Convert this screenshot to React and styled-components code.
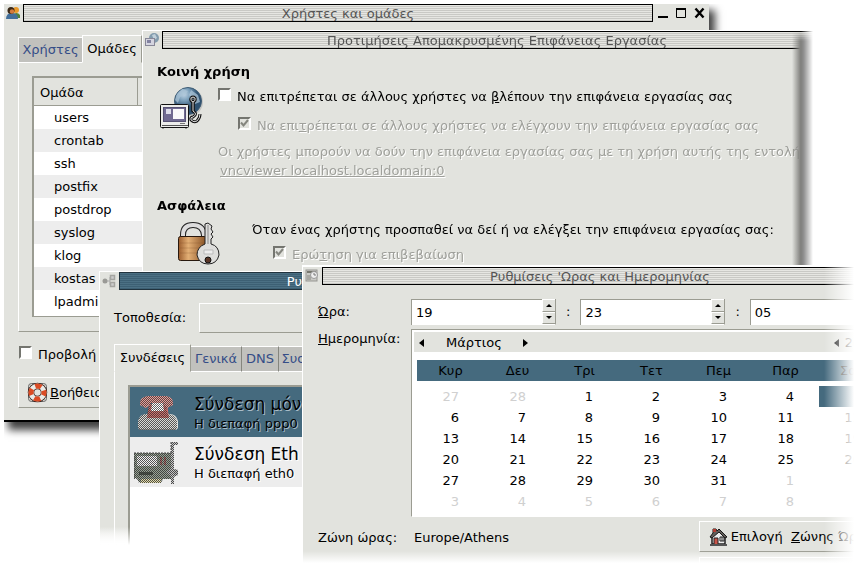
import React from "react";
import styled, { createGlobalStyle, css } from "styled-components";

const c = {
  face: "#e2e3de",
  dim: "#c1c1bd",
  blue: "#456a7e",
  edge: "#9b9c92",
  muted: "#9fa09b",
  link: "#354d87",
};

const Global = createGlobalStyle`
  * { box-sizing: border-box; }
  body { margin: 0; background: #fff; overflow: hidden; }
  body, button, input, table { font: 13px/20px "DejaVu Sans", sans-serif; color: #000; }
  button, input { margin: 0; }
`;

/* ---------- desktop and window frames ---------- */

const Desktop = styled.main`
  position: relative;
  height: 100vh;
  overflow: hidden;
`;

const Frame = styled.section`
  position: absolute;
  background: ${c.face};
`;

const UsersFrame = styled(Frame)`
  left: 4px;
  top: 4px;
  right: 147px;
  border-bottom: 2px solid #000;
  box-shadow: 5px 7px 8px 1px rgba(0, 0, 0, 0.75);
  clip-path: inset(0 -20px -22px 0);
`;

const RemoteFrame = styled(Frame)`
  left: 142px;
  top: 30px;
  right: 42px;
  height: 280px;
  overflow: hidden;
  mask-image: linear-gradient(to right, #000 calc(100% - 13px), transparent calc(100% - 1px));
  border-left: 1px solid #fff;
  border-top: 1px solid #fff;
  &::after {
    content: "";
    position: absolute;
    inset: 0 0 0 auto;
    width: 22px;
    background: linear-gradient(to right, rgba(226, 227, 222, 0), #858582 8px, #6f6f6f 12px);
    mask-image: linear-gradient(to bottom, transparent, #000 10px);
  }
`;

const NetworkFrame = styled(Frame)`
  left: 99px;
  top: 271px;
  width: 204px;
  overflow: hidden;
  border-left: 1px solid #fff;
  border-top: 1px solid #fff;
  background: linear-gradient(${c.face} calc(100% - 18px), #fff);
  &::after {
    content: "";
    position: absolute;
    inset: auto 0 0 0;
    height: 18px;
    background: linear-gradient(rgba(255, 255, 255, 0), #fff);
  }
`;

const ClockFrame = styled(Frame)`
  left: 302px;
  top: 265px;
  right: 0;
  bottom: 0;
  overflow: hidden;
  border-left: 1px solid #fff;
  border-top: 2px solid #fff;
  &::before {
    content: "";
    position: absolute;
    z-index: 1;
    inset: 0 0 0 auto;
    width: 32px;
    background: linear-gradient(to right, rgba(255, 255, 255, 0), #fff 30px);
    pointer-events: none;
  }
  &::after {
    content: "";
    position: absolute;
    inset: auto 0 0 0;
    height: 15px;
    background: linear-gradient(rgba(255, 255, 255, 0), #fff 12px);
    pointer-events: none;
  }
`;

const Spill = styled.div`
  width: calc(100% + ${(p) => p.$by}px);
`;

/* ---------- title bar ---------- */

const TitleRow = styled.header`
  display: flex;
  align-items: center;
  gap: 3px;
  height: 18px;
  padding-left: 2px;
`;

const TitleIcon = styled.svg`
  flex: none;
  width: 14px;
  height: 14px;
`;

const TitleBar = styled.h1`
  flex: 1;
  height: 18px;
  margin: 0;
  padding-left: ${(p) => p.$shift || 0}px;
  overflow: hidden;
  border: 1px solid #000;
  font-size: 13px;
  font-weight: 400;
  line-height: 17px;
  text-align: center;
  white-space: nowrap;
  color: #555;
  background: repeating-linear-gradient(#e6e6e2 0 1px, #c9c9c5 1px 2px);
  ${(p) =>
    p.$active &&
    css`
      color: #fff;
      text-align: right;
      border-color: #21333e;
      background: repeating-linear-gradient(#4b7084 0 1px, #3d6074 1px 2px);
    `}
`;

const WindowButtons = styled.div`
  display: flex;
  gap: 6px;
  width: 53px;
  flex: none;
`;

const WindowButton = styled.button`
  width: 13px;
  height: 16px;
  padding: 0;
  border: 0;
  background: none;
  svg { display: block; width: 13px; height: 16px; }
`;

function WinControls() {
  return (
    <WindowButtons>
      <WindowButton aria-label="Ελαχιστοποίηση">
        <svg viewBox="0 0 13 16"><path d="M2 11h10v2H2z" /></svg>
      </WindowButton>
      <WindowButton aria-label="Μεγιστοποίηση">
        <svg viewBox="0 0 13 16"><path d="M1.500 4v8.500h9V4" fill="none" stroke="#000" /><path d="M1 3h10v2H1z" /></svg>
      </WindowButton>
      <WindowButton aria-label="Κλείσιμο">
        <svg viewBox="0 0 13 16"><path d="M1.500 3.500l8 9m0-9l-8 9" stroke="#000" strokeWidth="2.400" /></svg>
      </WindowButton>
    </WindowButtons>
  );
}

/* ---------- shared controls ---------- */

const Tabs = styled.div`
  display: flex;
  align-items: flex-end;
`;

const Tab = styled.button`
  flex: none;
  height: ${(p) => (p.$on ? 28 : 26)}px;
  width: ${(p) => p.$w}px;
  padding: 0;
  overflow: hidden;
  white-space: nowrap;
  border: solid #fff;
  border-width: 1px 0 1px 1px;
  color: ${c.link};
  background: ${c.dim};
  ${(p) =>
    p.$on
      ? css`
          color: #000;
          background: ${c.face};
          border-bottom-color: ${c.face};
          border-right: 1px solid ${c.edge};
        `
      : p.$ruled &&
        css`
          border-left: 0;
          border-right: 1px solid #85867e;
        `}
`;

const Panel = styled.div`
  border-left: 1px solid #fff;
  border-bottom: 1px solid ${c.edge};
`;

const Sunken = css`
  border: solid ${c.edge};
  border-width: 2px 0 0 2px;
  background: #fff;
`;

const Check = styled.input`
  appearance: none;
  flex: none;
  width: 13px;
  height: 13px;
  border: 2px solid;
  border-color: #74756f #fff #fff #74756f;
  background: #fff;
  &:disabled { background: ${c.face}; }
`;

const CheckLabel = styled.label`
  display: flex;
  align-items: flex-start;
  gap: 6px;
  height: 20px;
  padding-top: 1px;
  white-space: nowrap;
  position: relative;
  > span { line-height: 18px; }
`;

const Tick = styled.svg`
  position: absolute;
  left: 2px;
  top: 3px;
  width: 9px;
  height: 9px;
`;

const Raised = styled.button`
  display: flex;
  align-items: center;
  gap: 2px;
  height: 31px;
  padding: 0 0 0 8px;
  border: solid;
  border-width: 1px 0 1px 1px;
  border-color: #fff ${c.edge} ${c.edge} #fff;
  background: ${c.face};
  white-space: nowrap;
  svg { flex: none; width: 21px; height: 21px; }
`;

const Faded = styled.span`
  color: ${c.muted};
  text-shadow: 1px 1px #fff;
`;

/* ---------- users and groups ---------- */

const UsersBody = styled.div`
  padding: 13px 14px 12px;
`;

const GroupsPanel = styled(Panel)`
  padding: 13px 13px 14px;
`;

const GroupTableBox = styled.div`
  ${Sunken}
  height: 241px;
  overflow: hidden;
  border-bottom: 1px solid ${c.edge};
`;

const GroupTable = styled.table`
  width: 100%;
  border-spacing: 0;
  table-layout: fixed;
  th {
    height: 28px;
    padding: 3px 0 0 6px;
    text-align: left;
    font-weight: 400;
    background: ${c.face};
    border-bottom: 1px solid ${c.edge};
    border-right: 1px solid ${c.edge};
  }
  th:first-child { width: 104px; }
  td { height: 23px; padding: 0 0 0 20px; white-space: nowrap; }
  tr:nth-child(even) td { background: #ededed; }
`;

const AllRow = styled.div`
  padding: 13px 0 0 1px;
  height: 45px;
`;

const groups = ["users", "crontab", "ssh", "postfix", "postdrop", "syslog", "klog", "kostas", "lpadmin"];

function Lifebuoy() {
  return (
    <svg viewBox="0 0 21 21">
      <rect x="1.500" y="1.500" width="18" height="18" rx="3" fill="none" stroke="#666" />
      <circle cx="10.500" cy="10.500" r="6.500" fill="none" stroke="#3a2520" strokeWidth="6.500" />
      <circle cx="10.500" cy="10.500" r="6.500" fill="none" stroke="#e9ebe8" strokeWidth="5" />
      <circle cx="10.500" cy="10.500" r="6.500" fill="none" stroke="#db4b24" strokeWidth="5" strokeDasharray="6.200 4.010" strokeDashoffset="3.100" />
    </svg>
  );
}

function UsersWindow() {
  return (
    <UsersFrame>
      <TitleRow>
        <TitleIcon viewBox="0 0 14 14">
          <circle cx="10" cy="4" r="3" fill="#e99929" /><path d="M6 12V9q5-4 8 0v3z" fill="#50823a" />
          <path d="M0 13q0-6 6-6t6 6z" fill="#426f9b" /><circle cx="5" cy="4.500" r="3.500" fill="#392817" /><circle cx="6" cy="5.500" r="2.200" fill="#d37b3e" />
        </TitleIcon>
        <TitleBar $shift={20}>Χρήστες και ομάδες</TitleBar>
        <WinControls />
      </TitleRow>
      <UsersBody>
        <Tabs role="tablist">
          <Tab role="tab" $w={64}>Χρήστες</Tab>
          <Tab role="tab" $w={60} $on>Ομάδες</Tab>
        </Tabs>
        <GroupsPanel>
          <GroupTableBox>
            <GroupTable>
              <thead><tr><th>Ομάδα</th><th /></tr></thead>
              <tbody>
                {groups.map((g) => <tr key={g}><td>{g}</td><td /></tr>)}
              </tbody>
            </GroupTable>
          </GroupTableBox>
        </GroupsPanel>
        <AllRow>
          <CheckLabel><Check type="checkbox" /><span>Προβολή</span></CheckLabel>
        </AllRow>
        <Raised><Lifebuoy /><span><u>Β</u>οήθεια</span></Raised>
      </UsersBody>
    </UsersFrame>
  );
}

/* ---------- remote desktop ---------- */

const RemoteBody = styled.div`
  padding: 13px 14px 0;
`;

const Heading = styled.h2`
  margin: 0;
  font-size: 13px;
  line-height: 20px;
`;

const Sharing = styled.div`
  display: flex;
  gap: 14px;
  padding: 5px 0 16px 3px;
`;

const Lines = styled.div`
  flex: none;
  display: flex;
  flex-direction: column;
  white-space: nowrap;
`;

const Inset = styled.div`
  padding: ${(p) => p.$top}px 0 0 ${(p) => p.$left}px;
`;

const Note = styled.p`
  margin: 6px 0 0;
  line-height: 19px;
  a { color: inherit; margin-left: 2px; }
`;

const Art = styled.svg`
  flex: none;
  width: ${(p) => p.$w}px;
  height: ${(p) => p.$h}px;
`;

const Security = styled.div`
  display: flex;
  gap: 31px;
  padding: 4px 0 0 20px;
`;

function SharedScreen() {
  return (
    <Art $w={44} $h={46} viewBox="0 0 44 46">
      <defs>
        <radialGradient id="globe" cx=".35" cy=".25"><stop offset="0" stopColor="#c1d5e5" /><stop offset=".5" stopColor="#769bb7" /><stop offset="1" stopColor="#2d506f" /></radialGradient>
      </defs>
      <circle cx="29" cy="15" r="14" fill="#999" opacity=".4" />
      <circle cx="28" cy="14" r="13.500" fill="url(#globe)" stroke="#3e5c74" />
      <path d="M17 7l5-5 6 2-3 4-5 2-2 6-3-3zM31 3l7 5 2 7-5 2-3-5-3-4z" fill="#a9c3d6" opacity=".75" />
      <rect x="0.500" y="17.500" width="28" height="23" rx="1" fill="#ececea" stroke="#111" />
      <rect x="3.500" y="20.500" width="22" height="14" fill="#706a91" stroke="#565273" />
      <rect x="6" y="22" width="5" height="5" fill="#dcdce8" />
      <rect x="13" y="22" width="11" height="10" fill="#f9f9fa" />
      <path d="M2 38.500h26M3 41v1m23-1v1" stroke="#555" /><path d="M20 36.500h5" stroke="#777" />
      <path d="M33 24v-9m-2-4q-1 3 2 4 3-1 2-4-2-2-4 0" fill="none" stroke="#111" strokeWidth="3" />
      <path d="M33 15v9q5 3 0 6-3 0-2 3 3 3 6 1 3-3 3-7" fill="none" stroke="#111" strokeWidth="3" />
      <path d="M33 15v9q5 3 0 6-3 0-2 3 3 3 6 1 3-3 3-7M31 11q-1 3 2 4 3-1 2-4-2-2-4 0" fill="none" stroke="#ddd" />
    </Art>
  );
}

function Padlock() {
  return (
    <Art $w={44} $h={48} viewBox="0 0 44 48">
      <defs>
        <linearGradient id="brass"><stop offset="0" stopColor="#9a5c2d" /><stop offset=".35" stopColor="#e3af75" /><stop offset="1" stopColor="#865023" /></linearGradient>
      </defs>
      <path d="M6 18V15Q6 5 16 5t11 10v3" fill="none" stroke="#222" strokeWidth="6" />
      <path d="M6 18V15Q6 5 16 5t11 10v3" fill="none" stroke="#ddd" strokeWidth="4" />
      <rect x="1.500" y="16.500" width="28" height="24" rx="2" fill="url(#brass)" stroke="#28190e" />
      <path d="M3 23h25M3 28h25M3 33h25" stroke="#7b4824" opacity=".25" />
      <path d="M28 4l3-1 4 3-1 3 2 3-2 2 2 3-2 2v5q8 2 8 11-2 9-11 9t-11-9q0-8 8-11z" fill="#dededc" stroke="#222" />
      <path d="M31 5v19" stroke="#888" /><path d="M27 30h9v4h-9z" fill="#eee" stroke="#bbb" />
      <circle cx="31" cy="40" r="3" fill="#5a3627" stroke="#111" />
    </Art>
  );
}

const Ticked = ({ children }) => (
  <CheckLabel>
    <Check type="checkbox" defaultChecked disabled />
    <Tick viewBox="0 0 9 9"><path d="M1 3.500l2.500 3L8 1" fill="none" stroke="#85867f" strokeWidth="2" /></Tick>
    <Faded>{children}</Faded>
  </CheckLabel>
);

function RemoteWindow() {
  return (
    <RemoteFrame>
      <Spill $by={74}>
        <TitleRow>
          <TitleIcon viewBox="0 0 14 14">
            <circle cx="9" cy="5" r="5" fill="#839cae" /><path d="M7 2l3-1 2 4-3 2z" fill="#c1d0da" />
            <rect x="0.500" y="5.500" width="9" height="7" fill="#d4d4df" stroke="#878797" /><path d="M2 7h4v3H2z" fill="#8282a0" />
          </TitleIcon>
          <TitleBar>Προτιμήσεις Απομακρυσμένης Επιφάνειας Εργασίας</TitleBar>
          <WinControls />
        </TitleRow>
        <RemoteBody>
          <Heading>Κοινή χρήση</Heading>
          <Sharing>
            <SharedScreen />
            <Lines>
              <CheckLabel><Check type="checkbox" /><span>Να επιτρέπεται σε άλλους χρήστες να <u>β</u>λέπουν την επιφάνεια εργασίας σας</span></CheckLabel>
              <Inset $top={9} $left={20}>
                <Ticked>Να επι<u>τ</u>ρέπεται σε άλλους χρήστες να ελέγχουν την επιφάνεια εργασίας σας</Ticked>
              </Inset>
              <Note>
                <Faded>Οι χρήστες μπορούν να δούν την επιφάνεια εργασίας σας με τη χρήση αυτής της εντολή<br /><a href="#vnc">vncviewer localhost.localdomain:0</a></Faded>
              </Note>
            </Lines>
          </Sharing>
          <Heading>Ασφάλεια</Heading>
          <Security>
            <Padlock />
            <Lines>
              <span>Όταν ένας χρήστης προσπαθεί να δεί ή να ελέγξει την επιφάνεια εργασίας σας:</span>
              <Inset $top={5} $left={21}>
                <Ticked>Ερώ<u>τ</u>ηση για επιβεβαίωση</Ticked>
              </Inset>
            </Lines>
          </Security>
        </RemoteBody>
      </Spill>
    </RemoteFrame>
  );
}

/* ---------- network ---------- */

const NetworkBody = styled.div`
  padding: 13px 0 0 14px;
`;

const LocationRow = styled.div`
  display: flex;
  align-items: center;
  justify-content: space-between;
  margin-bottom: 11px;
`;

const Combo = styled.select`
  width: 104px;
  height: 30px;
  appearance: none;
  border: solid;
  border-width: 1px 0 1px 1px;
  border-color: #fff ${c.edge} ${c.edge} #fff;
  border-radius: 0;
  background: ${c.face};
`;

const ConnectionPanel = styled.div`
  border-left: 1px solid #fff;
  padding: 13px 0 0 13px;
`;

const ConnectionList = styled.ul`
  ${Sunken}
  margin: 0;
  padding: 0;
  height: 160px;
  list-style: none;
`;

const Connection = styled.li`
  display: flex;
  align-items: center;
  gap: 16px;
  height: 50px;
  padding: 2px 0 0 4px;
  white-space: nowrap;
  overflow: hidden;
  background: ${(p) => (p.$on ? c.blue : "#ededed")};
  text-shadow: 1px 1px ${(p) => (p.$on ? "#a9bdc8" : "#fff")};
  strong { display: block; font-size: 17px; font-weight: 400; line-height: 20px; }
  span { display: block; line-height: 19px; }
`;

const Dither = () => (
  <pattern id="dither" width="2" height="2" patternUnits="userSpaceOnUse">
    <path d="M0 0h1v1H0zM1 1h1v1H1z" fill="#2c2c2c" />
  </pattern>
);

function Phone() {
  return (
    <Art $w={44} $h={44} viewBox="-4 0 44 44">
      <defs><Dither /></defs>
      <path d="M0 37v-7q2-7 8-7h24q6 0 8 7v7l-2 2H2z" fill="#dadad7" />
      <path d="M11 13h18l2 14H9z" fill="#cf6f6c" />
      <path d="M2 14q-1-8 8-9h18q8 1 7 9l-6 3-4-5H13l-5 5z" fill="#e99c97" />
      <path d="M14 12h11l1 8H13z" fill="#fff" />
      <path d="M0 37v-7q2-7 8-7h1l2-10-3 4-6-3q-1-8 8-9h18q8 1 7 9l-6 3-1 0 2 6q6 0 9 7v7l-2 2H2z" fill="url(#dither)" opacity=".75" />
      <path d="M1 38h38" stroke="#444" strokeDasharray="1" />
    </Art>
  );
}

function EthernetCard() {
  return (
    <Art $w={44} $h={46} viewBox="1 1 44 46">
      <path d="M1 14h39v26H30l-2 3H6l-2-4H1z" fill="#98a395" />
      <path d="M4 17h20v10H4z" fill="#f1f1f1" /><path d="M8 40h20v4H8z" fill="#e3dcab" />
      <path d="M33 33l5-4 7 2v5l-6 2z" fill="#b9b9b9" />
      <path d="M6 33h14v3H6z" fill="#4d564b" /><path d="M27 18h2v8h-2zM31 18h2v8h-2z" fill="#a86a65" />
      <path d="M38 3h7v3h-4v39h-3z" fill="#c9c9c9" />
      <path d="M1 14h37V3h7v3h-4v24l4 1v5l-4 2v7h-3v-5h-8l-2 4H6l-2-4H1z" fill="url(#dither)" opacity=".8" />
      <path d="M1 14h37M38 3v11M1 14v25" fill="none" stroke="#444" strokeDasharray="2 1" />
    </Art>
  );
}

function NetworkWindow() {
  return (
    <NetworkFrame>
      <TitleRow>
        <TitleIcon viewBox="0 0 14 14">
          <circle cx="3" cy="7" r="2.500" fill="#9a9a96" /><path d="M5 7h3M8 3v8" stroke="#aaa" />
          <path d="M8.500 1.500h4v4h-4zM8.500 8.500h4v4h-4z" fill="#ccc" stroke="#a5a5a1" strokeWidth="1.500" />
        </TitleIcon>
        <TitleBar $active>Ρυ</TitleBar>
      </TitleRow>
      <NetworkBody>
        <LocationRow>
          <label htmlFor="place">Τοποθεσία:</label>
          <Combo id="place" />
        </LocationRow>
        <Tabs role="tablist">
          <Tab role="tab" $w={77} $on>Συνδέσεις</Tab>
          <Tab role="tab" $w={51} $ruled>Γενικά</Tab>
          <Tab role="tab" $w={37} $ruled>DNS</Tab>
          <Tab role="tab" $w={30} $ruled>Συσ</Tab>
        </Tabs>
        <ConnectionPanel>
          <ConnectionList>
            <Connection $on><Phone /><div><strong>Σύνδεση μόν</strong><span>Η διεπαφή ppp0</span></div></Connection>
            <Connection><EthernetCard /><div><strong>Σύνδεση Eth</strong><span>Η διεπαφή eth0</span></div></Connection>
          </ConnectionList>
        </ConnectionPanel>
      </NetworkBody>
    </NetworkFrame>
  );
}

/* ---------- date and time ---------- */

const ClockBody = styled.div`
  display: grid;
  grid-template-columns: 93px 1fr;
  row-gap: 4px;
  padding: 14px 42px 0 15px;
`;

const TimeRow = styled.div`
  display: flex;
  align-items: center;
  gap: 10px;
`;

const Label = styled.label`
  line-height: ${(p) => p.$h}px;
  white-space: nowrap;
`;

const Spin = styled.div`
  display: flex;
  flex: none;
  width: 145px;
  height: 26px;
  input {
    ${Sunken}
    border-width: 1px 0 0 1px;
    width: 131px;
    padding: 1px 0 0 4px;
    outline: 0;
  }
`;

const SpinButtons = styled.div`
  display: grid;
  flex: 1;
  border-right: 1px solid ${c.edge};
  border-bottom: 1px solid #fff;
`;

const SpinButton = styled.button`
  display: grid;
  place-items: center;
  min-height: 0;
  padding: 0;
  border: solid #fff;
  border-width: 1px 0 0 1px;
  border-bottom: 1px solid ${c.edge};
  background: ${c.face};
`;

const Arrow = styled.svg`
  display: block;
  width: 6px;
  height: 3px;
`;

const SideArrow = styled.button`
  width: 6px;
  height: 12px;
  padding: 0;
  border: 0;
  background: none;
  svg { display: block; width: 5px; height: 8px; }
`;

const CalendarBox = styled.div`
  ${Sunken}
  border-width: 1px 0 1px 1px;
  border-bottom-color: #fff;
  height: 188px;
  padding: 2px;
`;

const CalendarHead = styled.div`
  display: flex;
  align-items: center;
  justify-content: space-between;
  height: 20px;
  padding: 2px 4px 0 5px;
  background: ${c.face};
  div { display: flex; align-items: center; gap: 21px; }
  div + div { gap: 5px; }
`;

const Calendar = styled.table`
  width: 469px;
  margin: 8px 0 0 3px;
  border-spacing: 0;
  table-layout: fixed;
  line-height: 21px;
  th { height: 21px; padding: 0; font-weight: 400; background: ${c.blue}; }
  tbody::before { content: ""; display: block; height: 5px; }
`;

const Day = styled.td`
  height: 21px;
  padding: 0 25px 0 0;
  text-align: right;
  color: ${(p) => (p.$out ? "#d0d0d0" : "#000")};
  background: ${(p) => (p.$picked ? c.blue : "none")};
`;

const ZoneName = styled.div`
  display: flex;
  justify-content: space-between;
  align-items: flex-start;
  > span { line-height: 34px; margin-left: 3px; }
`;

const ZoneButtons = styled.div`
  display: grid;
  gap: 5px;
  width: 196px;
`;

const days = ["Κυρ", "Δευ", "Τρι", "Τετ", "Πεμ", "Παρ", "Σαβ"];
const weeks = [0, 1, 2, 3, 4, 5].map((w) =>
  days.map((_, d) => {
    const n = w * 7 + d - 1;
    return n < 1 ? { n: n + 28, out: true } : n > 31 ? { n: n - 31, out: true } : { n };
  })
);

const Triangle = ({ back }) => (
  <svg viewBox="0 0 5 8"><path d={back ? "M5 0v8L0 4z" : "M0 0v8l5-4z"} /></svg>
);

function SpinBox({ id, value, label }) {
  return (
    <Spin>
      <input id={id} defaultValue={value} aria-label={label} />
      <SpinButtons>
        <SpinButton aria-label="+"><Arrow viewBox="0 0 6 3"><path d="M0 3h6L3 0z" /></Arrow></SpinButton>
        <SpinButton aria-label="-"><Arrow viewBox="0 0 6 3"><path d="M0 0h6L3 3z" /></Arrow></SpinButton>
      </SpinButtons>
    </Spin>
  );
}

function House() {
  return (
    <svg viewBox="0 0 21 21">
      <path d="M4 10v8h13v-8l-6-6z" fill="#eee" stroke="#222" strokeWidth="1.500" />
      <path d="M2 11L5 7V3h3l1 2 2-2 8 8-2 1-6-6-7 6z" fill="#625e5a" stroke="#181818" />
      <path d="M6 12h4v7H6z" fill="#c85448" stroke="#222" /><path d="M12 11h4v4h-4zM14 11v4" fill="#fff" stroke="#222" />
      <path d="M5 3h3v3H5z" fill="#b23b30" /><path d="M2 19h17" stroke="#555" strokeWidth="2" />
    </svg>
  );
}

function ClockWindow() {
  return (
    <ClockFrame>
      <Spill $by={78}>
        <TitleRow>
          <TitleIcon viewBox="0 0 14 14">
            <rect x="1" y="1" width="11" height="11" fill="#c9c9c5" stroke="#969691" /><path d="M2 3h9" stroke="#77776e" strokeWidth="2" />
            <path d="M3 6v5m2-5v5" stroke="#85857e" /><circle cx="9" cy="6" r="3.500" fill="#eee" stroke="#999" /><path d="M9 4v2h2" fill="none" stroke="#777" />
          </TitleIcon>
          <TitleBar>Ρυθμίσεις 'Ωρας και Ημερομηνίας</TitleBar>
          <WinControls />
        </TitleRow>
        <ClockBody>
          <Label htmlFor="hour" $h={26}><u>Ώ</u>ρα:</Label>
          <TimeRow>
            <SpinBox id="hour" value="19" label="Ώρα" /><span>:</span>
            <SpinBox value="23" label="Λεπτά" /><span>:</span>
            <SpinBox value="05" label="Δευτερόλεπτα" />
          </TimeRow>
          <Label as="span" $h={20}><u>Η</u>μερομηνία:</Label>
          <CalendarBox>
            <CalendarHead>
              <div>
                <SideArrow aria-label="Προηγούμενος μήνας"><Triangle back /></SideArrow>
                Μάρτιος
                <SideArrow aria-label="Επόμενος μήνας"><Triangle /></SideArrow>
              </div>
              <div>
                <SideArrow aria-label="Προηγούμενο έτος"><Triangle back /></SideArrow>
                2005
                <SideArrow aria-label="Επόμενο έτος"><Triangle /></SideArrow>
              </div>
            </CalendarHead>
            <Calendar>
              <thead><tr>{days.map((d) => <th key={d}>{d}</th>)}</tr></thead>
              <tbody>
                {weeks.map((week, i) => (
                  <tr key={i}>
                    {week.map(({ n, out }, j) => <Day key={j} $out={out} $picked={!out && n === 5}>{n}</Day>)}
                  </tr>
                ))}
              </tbody>
            </Calendar>
          </CalendarBox>
          <Label as="span" $h={34}>Ζώνη ώρας:</Label>
          <ZoneName>
            <span>Europe/Athens</span>
            <ZoneButtons>
              <Raised><House /><span>Επιλογή &nbsp;<u>Ζ</u>ώνης Ώρας</span></Raised>
              <Raised aria-label="Ρυθμίσεις" />
            </ZoneButtons>
          </ZoneName>
        </ClockBody>
      </Spill>
    </ClockFrame>
  );
}

export default function App() {
  return (
    <>
      <Global />
      <Desktop>
        <UsersWindow />
        <RemoteWindow />
        <NetworkWindow />
        <ClockWindow />
      </Desktop>
    </>
  );
}
